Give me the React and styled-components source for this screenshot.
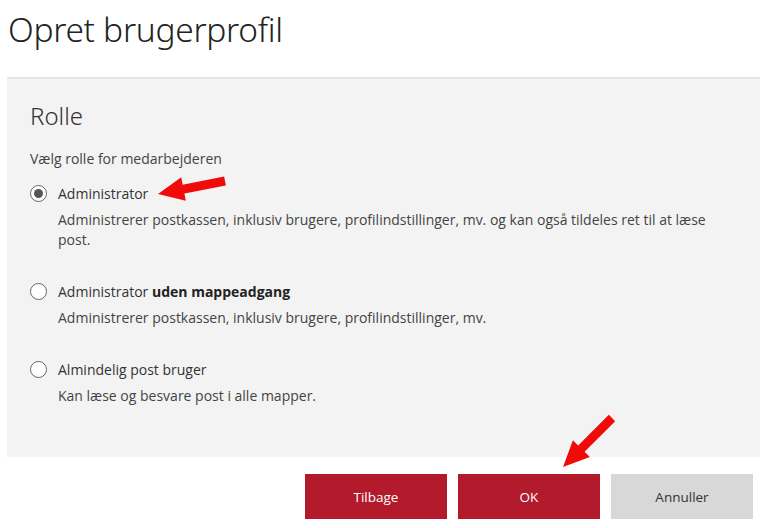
import React from 'react';
import styled, { createGlobalStyle } from 'styled-components';

const GlobalStyle = createGlobalStyle`
  body {
    margin: 0;
    background: #ffffff;
    font-family: "Open Sans", "Noto Sans", sans-serif;
    color: #333333;
  }
`;

const Page = styled.div`
  position: relative;
  width: 768px;
  height: 528px;
  overflow: hidden;
  padding: 0 8px 0 7px;
  box-sizing: border-box;
`;

const Title = styled.h1`
  margin: 0;
  padding: 4px 0 0 1px;
  height: 72px;
  font-family: "Noto Sans", "Open Sans", sans-serif;
  font-weight: 300;
  font-size: 33.5px;
  color: #222222;
  letter-spacing: -0.3px;
  line-height: 50px;
  box-sizing: border-box;
`;

const Panel = styled.section`
  background: #f3f3f3;
  border-top: 2px solid #e6e6e6;
  margin-top: 5px;
  height: 380px;
  padding: 20px 23px 0;
  box-sizing: border-box;
`;

const PanelTitle = styled.h2`
  margin: 0;
  font-family: "Noto Sans", "Open Sans", sans-serif;
  font-weight: 300;
  font-size: 24px;
  line-height: 34px;
  color: #333333;
`;

const Hint = styled.p`
  margin: 16px 0 10px;
  font-size: 14px;
  line-height: 20px;
  color: #444444;
`;

const Options = styled.div`
  display: flex;
  flex-direction: column;
  gap: 27px;
`;

const Option = styled.label`
  display: grid;
  grid-template-columns: 28px 1fr;
  align-items: start;
  font-size: 14px;
  line-height: 20px;
  color: #333333;
`;

const Radio = styled.span`
  width: 17px;
  height: 17px;
  border-radius: 50%;
  border: 1.5px solid #666666;
  box-sizing: border-box;
  margin-top: 6px;
  display: flex;
  align-items: center;
  justify-content: center;
  background: #ffffff;

  &::after {
    content: '';
    width: 9px;
    height: 9px;
    border-radius: 50%;
    background: ${(p) => (p.$checked ? '#555555' : 'transparent')};
  }
`;

const OptionLabel = styled.span`
  padding-top: 5px;
  line-height: 20px;
  color: #333333;

  b {
    font-weight: 700;
    color: #222222;
  }
`;

const OptionDesc = styled.span`
  grid-column: 2;
  margin-top: 6px;
  padding-right: 20px;
  color: #444444;
`;

const Actions = styled.div`
  display: flex;
  justify-content: flex-end;
  gap: 11px;
  padding: 17px 7px 0 0;
`;

const Button = styled.button`
  width: 142px;
  height: 45px;
  border: none;
  font-family: "Open Sans", "Noto Sans", sans-serif;
  font-size: 13.5px;
  background: ${(p) => (p.$primary ? '#b31a2c' : '#d8d8d8')};
  color: ${(p) => (p.$primary ? '#ffffff' : '#333333')};
`;

const Arrow = styled.svg`
  position: absolute;
  left: 0;
  top: 0;
  overflow: visible;
  pointer-events: none;
`;

const options = [
  {
    label: 'Administrator',
    desc: 'Administrerer postkassen, inklusiv brugere, profilindstillinger, mv. og kan også tildeles ret til at læse post.',
    checked: true,
  },
  {
    label: (
      <>
        Administrator <b>uden mappeadgang</b>
      </>
    ),
    desc: 'Administrerer postkassen, inklusiv brugere, profilindstillinger, mv.',
  },
  {
    label: 'Almindelig post bruger',
    desc: 'Kan læse og besvare post i alle mapper.',
  },
];

// annotation arrow drawn over the screenshot
const RedArrow = ({ x1, y1, x2, y2 }) => {
  const dx = x2 - x1;
  const dy = y2 - y1;
  const len = Math.sqrt(dx * dx + dy * dy);
  const ux = dx / len;
  const uy = dy / len;
  const head = 26;
  const bx = x2 - ux * head;
  const by = y2 - uy * head;
  const px = -uy;
  const py = ux;
  const w = 12;
  const sw = 4.5;
  const pts = [
    [x1 + px * sw, y1 + py * sw],
    [bx + px * sw, by + py * sw],
    [bx + px * w, by + py * w],
    [x2, y2],
    [bx - px * w, by - py * w],
    [bx - px * sw, by - py * sw],
    [x1 - px * sw, y1 - py * sw],
  ]
    .map((p) => p.join(','))
    .join(' ');
  return (
    <Arrow width="768" height="528">
      <polygon points={pts} fill="#f00a0a" />
    </Arrow>
  );
};

export default function App() {
  return (
    <>
      <GlobalStyle />
      <Page>
        <Title>Opret brugerprofil</Title>
        <Panel>
          <PanelTitle>Rolle</PanelTitle>
          <Hint>Vælg rolle for medarbejderen</Hint>
          <Options>
            {options.map((o, i) => (
              <Option key={i}>
                <Radio $checked={o.checked} />
                <OptionLabel>{o.label}</OptionLabel>
                <OptionDesc>{o.desc}</OptionDesc>
              </Option>
            ))}
          </Options>
        </Panel>
        <Actions>
          <Button $primary>Tilbage</Button>
          <Button $primary>OK</Button>
          <Button>Annuller</Button>
        </Actions>
        <RedArrow x1={225} y1={181} x2={158} y2={194} />
        <RedArrow x1={612} y1={418} x2={563} y2={467} />
      </Page>
    </>
  );
}
